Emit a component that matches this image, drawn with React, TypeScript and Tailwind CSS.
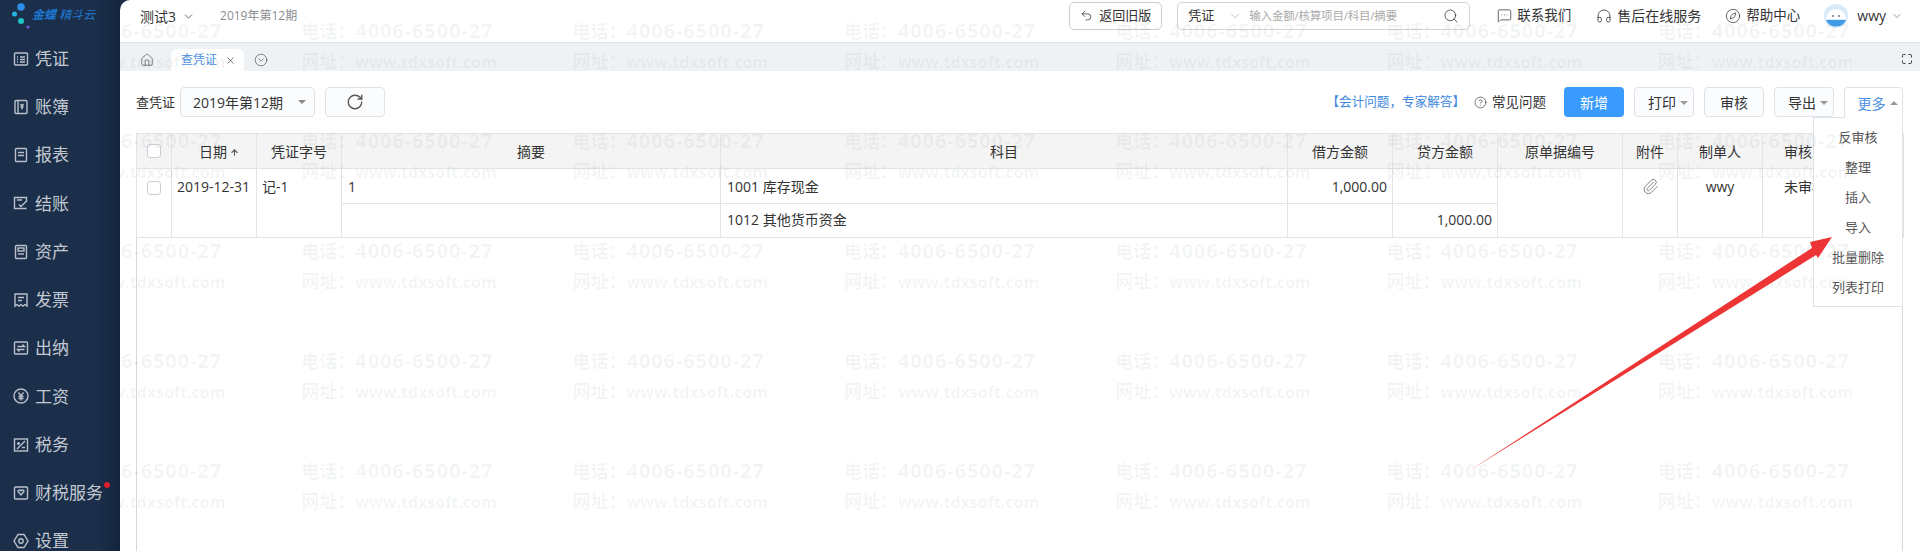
import { ArrowUp, ChevronDown, CircleChevronDown, CircleHelp, Compass, Headphones, House, Maximize, MessageSquareMore, Paperclip, RotateCw, Search, Undo2, X } from 'lucide-react'

const font = { fontFamily: '"Open Sans", "Noto Sans CJK SC", sans-serif' }

function Glyph({ children }: { children: React.ReactNode }) {
  return (
    <svg width="16" height="16" viewBox="0 0 16 16" fill="none" stroke="#b9c0c9" strokeWidth="1.4" className="shrink-0">
      {children}
    </svg>
  )
}

const menu: { label: string; icon: React.ReactNode; dot?: boolean }[] = [
  { label: '凭证', icon: <Glyph><rect x="1.5" y="2" width="13" height="12" rx="1" /><path d="M4 6h1M7 6h5M4 8.5h1M7 8.5h5M4 11h1M7 11h5" /></Glyph> },
  { label: '账簿', icon: <Glyph><rect x="2" y="1.5" width="12" height="13" rx="1" /><path d="M5 1.5v13M7.5 5l1.5 2 1.5-2M9 7v3.5M7.5 8h3" /></Glyph> },
  { label: '报表', icon: <Glyph><rect x="2.5" y="1.5" width="11" height="13" rx="1" /><path d="M5 5.5h6M5 8.5h6" /></Glyph> },
  { label: '结账', icon: <Glyph><path d="M13.5 7V2.5h-12v11h12" /><path d="M4 5h5M4 8l0 0M6 9.5l2 2 5-5" /></Glyph> },
  { label: '资产', icon: <Glyph><rect x="2.5" y="1.5" width="11" height="13" rx="1" /><rect x="5" y="4" width="6" height="3" /><path d="M5 10h6" /></Glyph> },
  { label: '发票', icon: <Glyph><path d="M2 2h12v12l-2-1.5-2 1.5-2-1.5-2 1.5-2-1.5-2 1.5z" /><path d="M5 5.5h6M5 8.5h4" /></Glyph> },
  { label: '出纳', icon: <Glyph><rect x="1.5" y="2" width="13" height="12" rx="1" /><path d="M4.5 6.5h7l-2-2M11.5 9.5h-7l2 2" /></Glyph> },
  { label: '工资', icon: <Glyph><circle cx="8" cy="8" r="7" /><path d="M5.5 4.5 8 8l2.5-3.5M5.5 8.5h5M5.5 10.5h5M8 8v4.5" /></Glyph> },
  { label: '税务', icon: <Glyph><rect x="1.5" y="2" width="13" height="12" /><path d="M4 12l8-8M4 6.5h3M5.5 5v3M9 10.5h3" /></Glyph> },
  { label: '财税服务', dot: true, icon: <Glyph><rect x="1.5" y="2" width="13" height="12" rx="1" /><path d="M5 6.5 8 10l3-3.5a1.5 1.5 0 0 0-3 0 1.5 1.5 0 0 0-3 0z" /></Glyph> },
  { label: '设置', icon: <Glyph><path d="M5 1.5h6L15 8l-4 6.5H5L1 8z" /><circle cx="8" cy="8" r="2.2" /></Glyph> },
]

function Sidebar() {
  return (
    <aside className="w-[120px] shrink-0 flex flex-col bg-gradient-to-r from-[#1b2f4b] from-80% to-[#14243d] z-20">
      <div className="h-[34.5px] shrink-0 relative flex items-center">
        <svg width="32" height="34" viewBox="0 0 32 34" className="shrink-0">
          <circle cx="21" cy="7" r="3.8" fill="#2f8fe8" />
          <circle cx="14.5" cy="14" r="2.5" fill="#27b5e6" />
          <circle cx="21" cy="21" r="3" fill="#21c4c4" />
          <circle cx="28" cy="27" r="1.6" fill="#7a55d0" />
        </svg>
        <span className="text-[12px] italic text-[#1f78d1] whitespace-nowrap -mt-[4px]"><b>金蝶</b> 精斗云</span>
      </div>
      {menu.map((m) => (
        <div key={m.label} className="h-[48.25px] shrink-0 flex items-center pl-[13px] gap-[6px] text-[#c3c9d1] text-[17px]">
          {m.icon}
          <span className="relative whitespace-nowrap">
            {m.label}
            {m.dot && <i className="absolute -right-[7px] top-[2px] w-[6px] h-[6px] rounded-full bg-[#d9202c]" />}
          </span>
        </div>
      ))}
    </aside>
  )
}

function TopBar() {
  return (
    <header className="h-[42px] shrink-0 flex items-start text-[#333]">
      <div className="flex items-center h-[32px] pl-[20px] text-[14px]">
        <span>测试3</span>
        <ChevronDown size={13} strokeWidth={1.3} className="ml-[6px]" />
        <span className="ml-[25px] text-[12px] text-[#8c8c8c]">2019年第12期</span>
      </div>
      <div className="ml-auto flex items-center h-[29px] mt-px">
        <button className="w-[93px] h-[28px] border border-[#ccc] rounded-[5px] flex items-center justify-center gap-[6px] text-[13px]">
          <Undo2 size={13} strokeWidth={1.4} />
          返回旧版
        </button>
        <div className="ml-[15px] w-[293px] h-[28px] border border-[#d4d4d4] rounded-[5px] flex items-center pl-[10px] pr-[10px]">
          <span className="text-[13px] w-[40px]">凭证</span>
          <ChevronDown size={14} strokeWidth={1} className="text-[#999]" />
          <span className="ml-[7px] text-[11.5px] text-[#aaa] tracking-[-0.2px]">输入金额/核算项目/科目/摘要</span>
          <Search size={16} strokeWidth={1.2} className="ml-auto" />
        </div>
        <div className="ml-[27px] flex items-center gap-[5px] text-[13.5px]">
          <MessageSquareMore size={15} strokeWidth={1.2} />
          联系我们
        </div>
        <div className="ml-[25px] flex items-center gap-[5px] text-[14px]">
          <Headphones size={16} strokeWidth={1.2} />
          售后在线服务
        </div>
        <div className="ml-[24px] flex items-center gap-[5px] text-[13.5px]">
          <Compass size={16} strokeWidth={1.1} />
          帮助中心
        </div>
        <svg width="24" height="24" viewBox="0 0 24 24" className="ml-[24px]">
          <circle cx="12" cy="12" r="12" fill="#d8e9f8" />
          <path d="M2 15a10 10 0 0 1 20 0z" fill="#fff" />
          <path d="M2 16h20a11 11 0 0 1-20 0z" fill="#3f9be8" />
          <circle cx="9" cy="12" r="0.9" fill="#667" />
          <circle cx="15" cy="12" r="0.9" fill="#667" />
        </svg>
        <span className="ml-[9px] text-[14px]">wwy</span>
        <ChevronDown size={12} strokeWidth={1.2} className="ml-[5px] mr-[17px] text-[#555]" />
      </div>
    </header>
  )
}

function TabStrip() {
  return (
    <div className="h-[29px] shrink-0 bg-[#eff2f5] border-t border-[#e1e5ea] flex items-end pl-[20px] pr-[7px] text-[#444]">
      <House size={14} strokeWidth={1.1} className="mb-[4px]" />
      <div className="ml-[17px] w-[73px] h-[22px] bg-white rounded-t-[6px] flex items-center pl-[10px] text-[12px] text-[#4a90e2]">
        查凭证
        <X size={11} strokeWidth={1.4} className="ml-[8px] text-[#333]" />
      </div>
      <CircleChevronDown size={14} strokeWidth={1.1} className="ml-[10px] mb-[4px]" />
      <Maximize size={12} strokeWidth={1.8} className="ml-auto mb-[6px] text-[#222]" />
    </div>
  )
}

const btn = 'w-[60px] h-[30px] border border-[#dfe3e8] bg-[#fafcfe] rounded-[4px] flex items-center justify-center text-[14px] text-[#333]'
const caret = 'ml-[4px] mt-[1px] border-x-[4px] border-x-transparent border-t-[4px] border-t-[#999]'

function Toolbar() {
  return (
    <div className="h-[62px] shrink-0 flex items-start pt-[16px] pl-[16px] pr-[17px]">
      <span className="text-[13px] leading-[30px] text-[#333]">查凭证</span>
      <div className="ml-[5px] w-[135px] h-[30px] border border-[#dfe3e8] bg-[#fafcfe] rounded-[4px] flex items-center pl-[12px] text-[14px] text-[#333]">
        2019年第12期
        <i className="ml-[15px] border-x-[4px] border-x-transparent border-t-[4px] border-t-[#888]" />
      </div>
      <button className={`ml-[10px] ${btn}`}><RotateCw size={18} strokeWidth={1.8} className="text-[#555]" /></button>
      <span className="ml-auto text-[12.6px] leading-[30px] text-[#3f88dd]">【会计问题，专家解答】</span>
      <CircleHelp size={13} strokeWidth={1.2} className="ml-[9px] mt-[9px] text-[#333]" />
      <span className="ml-[5px] text-[13.5px] leading-[30px] text-[#333]">常见问题</span>
      <button className="ml-[18px] w-[60px] h-[30px] rounded-[4px] bg-[#3a9bfc] text-white text-[14px]">新增</button>
      <button className={`ml-[10px] pl-[8px] ${btn}`}>打印<i className={caret} /></button>
      <button className={`ml-[10px] ${btn}`}>审核</button>
      <button className={`ml-[10px] pl-[8px] ${btn}`}>导出<i className={caret} /></button>
      <div className="ml-[10px] relative">
        <button className="relative z-10 w-[59px] h-[31px] pl-[8px] border border-b-0 border-[#dfe3e8] bg-white rounded-t-[4px] flex items-center justify-center text-[14px] text-[#4a90e2]">
          更多<i className="ml-[4px] border-x-[4px] border-x-transparent border-b-[4px] border-b-[#999]" />
        </button>
        <ul className="absolute right-0 top-[30px] w-[90px] h-[190px] border border-[#dfe3e8] bg-white z-[5] pt-[4px] text-[13px] text-[#555] text-center">
          {['反审核', '整理', '插入', '导入', '批量删除', '列表打印'].map((t) => (
            <li key={t} className="h-[30px] leading-[30px]">{t}</li>
          ))}
        </ul>
      </div>
    </div>
  )
}

const columns = [35, 85, 85, 379, 567, 105, 105, 125, 55, 85, 85, 56]
const headers = ['', '日期', '凭证字号', '摘要', '科目', '借方金额', '贷方金额', '原单据编号', '附件', '制单人', '审核人', '']
const td = 'border border-[#e3e3e3] align-top p-0 text-[14px] text-[#333]'

function Checkbox() {
  return <span className="block w-[14px] h-[14px] mx-auto border border-[#c9ced6] rounded-[3px] bg-white" />
}

function VoucherTable() {
  return (
    <div className="flex-1 mx-[17px] ml-[16px] border-x border-t border-[#d8d8d8] min-h-0">
      <table className="table-fixed border-collapse w-[1765px] -ml-px -mt-px">
        <colgroup>
          {columns.map((w, i) => <col key={i} style={{ width: w }} />)}
        </colgroup>
        <thead>
          <tr className="h-[35px] bg-[#f4f4f4]">
            {headers.map((h, i) => (
              <th key={i} className={`border border-[#e3e3e3] font-normal text-[14px] text-[#333] p-0 ${h === '日期' ? 'pl-[10px]' : ''}`}>
                {i === 0 ? <Checkbox /> : h}
                {h === '日期' && <ArrowUp size={9} strokeWidth={3} className="inline ml-[3px] text-[#555]" />}
              </th>
            ))}
          </tr>
        </thead>
        <tbody>
          <tr className="h-[35px]">
            <td rowSpan={2} className={td}><div className="pt-[12px]"><Checkbox /></div></td>
            <td rowSpan={2} className={`${td} whitespace-nowrap pt-[7px] pl-[5px]`}>2019-12-31</td>
            <td rowSpan={2} className={`${td} pt-[7px] pl-[5px]`}>记-1</td>
            <td className={`${td} pt-[7px] pl-[6px]`}>1</td>
            <td className={`${td} pt-[7px] pl-[6px]`}>1001 库存现金</td>
            <td className={`${td} pt-[7px] pr-[5px] text-right`}>1,000.00</td>
            <td className={td} />
            <td rowSpan={2} className={td} />
            <td rowSpan={2} className={td}><div className="flex justify-center pt-[9px]"><Paperclip size={17} strokeWidth={1.3} className="text-[#777]" /></div></td>
            <td rowSpan={2} className={`${td} pt-[7px] text-center`}>wwy</td>
            <td rowSpan={2} className={`${td} pt-[7px] text-center`}>未审核</td>
            <td rowSpan={2} className={td} />
          </tr>
          <tr className="h-[34px]">
            <td className={td} />
            <td className={`${td} pt-[5px] pl-[6px]`}>1012 其他货币资金</td>
            <td className={td} />
            <td className={`${td} pt-[5px] pr-[5px] text-right`}>1,000.00</td>
          </tr>
        </tbody>
      </table>
    </div>
  )
}

function Watermark() {
  return (
    <div className="absolute inset-0 overflow-hidden pointer-events-none z-10">
      <div className="grid grid-cols-[repeat(8,271.3px)] auto-rows-[110px] -ml-[90px]">
        {Array.from({ length: 40 }).map((_, i) => (
          <div key={i} className="pt-[16px] text-[rgba(60,70,90,0.06)] font-bold leading-[30px] whitespace-nowrap">
            <div className="text-[18px]">电话：<span className="text-[20px] tracking-[0.9px]">4006-6500-27</span></div>
            <div className="text-[18px]">网址：<span className="text-[16px]">www.tdxsoft.com</span></div>
          </div>
        ))}
      </div>
    </div>
  )
}

export default function App() {
  return (
    <div style={font} className="w-[1920px] h-[551px] flex overflow-hidden bg-[#1b2f4b]">
      <Sidebar />
      <main className="relative flex-1 min-w-0 flex flex-col bg-white rounded-tl-[10px] overflow-hidden">
        <TopBar />
        <TabStrip />
        <Toolbar />
        <VoucherTable />
        <Watermark />
        <svg className="absolute left-0 top-0 z-20 pointer-events-none" width="1800" height="551" viewBox="120 0 1800 551">
          <polygon points="1832,237 1810,242 1812,248 1469,471 1816,255 1818,258" fill="#ee3535" />
        </svg>
      </main>
    </div>
  )
}
